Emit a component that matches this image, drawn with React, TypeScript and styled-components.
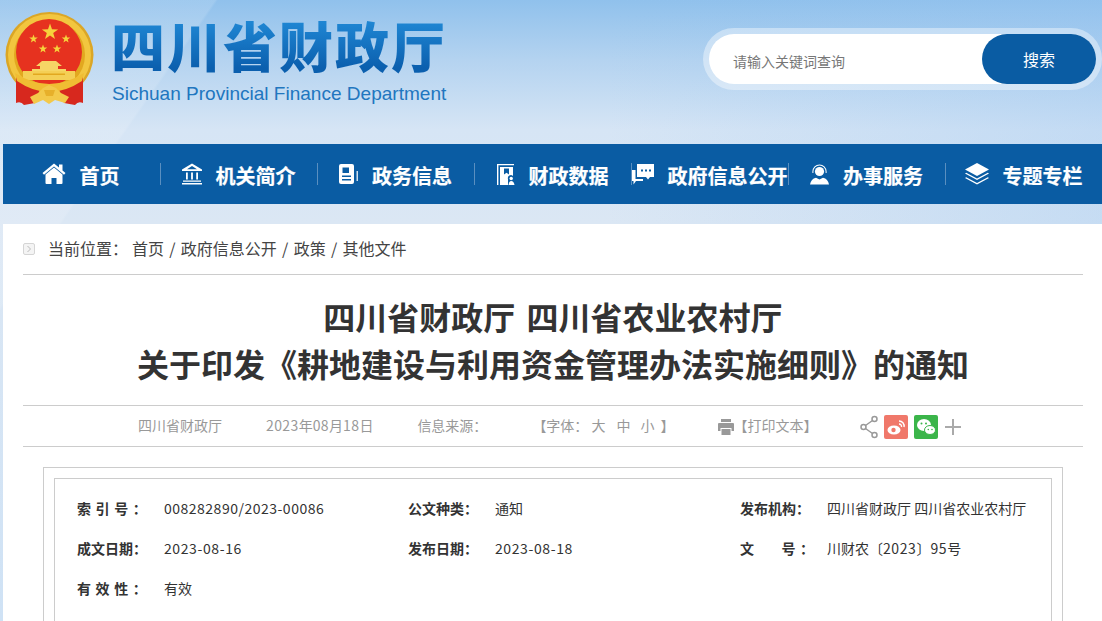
import React from "react";
import styled, { createGlobalStyle } from "styled-components";

const GlobalStyle = createGlobalStyle`
  html, body {
    margin: 0;
    padding: 0;
    height: 621px;
    overflow: hidden;
  }
  body {
    font-family: "Noto Sans CJK SC", "Noto Sans", sans-serif;
    color: #333;
    background:
      linear-gradient(125deg, rgba(255,255,255,0.14) 0 14%, rgba(255,255,255,0) 14.2%),
      linear-gradient(90deg, rgba(150,195,240,0) 55%, rgba(150,195,240,0.3) 100%),
      linear-gradient(180deg, #90c1ec 0, #b4d3f0 60px, #d6e5f5 130px, #dbe7f4 224px, #cfe2f5 621px);
  }
`;

const Page = styled.div`
  width: 1102px;
  height: 621px;
  overflow: hidden;
`;

const Header = styled.header`
  height: 144px;
  display: flex;
  justify-content: space-between;
  padding: 11px 0 0 5px;
  box-sizing: border-box;
`;

const Brand = styled.div`
  display: flex;
  align-items: flex-start;
  gap: 17px;
`;

const BrandText = styled.div`
  display: flex;
  flex-direction: column;
  padding-top: 1px;
`;

const BrandTitle = styled.div`
  font-size: 54px;
  line-height: 66px;
  font-weight: 900;
  letter-spacing: 2px;
  margin-left: -1px;
  white-space: nowrap;
  background: linear-gradient(180deg, #1f86d3 15%, #0b5fae 85%);
  -webkit-background-clip: text;
  background-clip: text;
  color: transparent;
`;

const BrandSub = styled.div`
  font-family: "Liberation Sans", Arial, sans-serif;
  font-size: 19.05px;
  line-height: 22px;
  color: #2176bf;
  margin-top: 5px;
  white-space: nowrap;
`;

const SearchRing = styled.div`
  width: 399px;
  height: 62px;
  margin-top: 17px;
  padding: 6px;
  box-sizing: border-box;
  border-radius: 31px;
  background: rgba(255, 255, 255, 0.4);
`;

const SearchBox = styled.div`
  height: 50px;
  display: flex;
  align-items: center;
  justify-content: space-between;
  border-radius: 25px;
  background: #fff;
`;

const SearchHint = styled.span`
  font-size: 14px;
  color: #777;
  margin-left: 24px;
  margin-top: 3px;
`;

const SearchButton = styled.button`
  width: 114px;
  height: 50px;
  border: 0;
  border-radius: 25px;
  background: #0a5ca3;
  color: #fff;
  font-family: inherit;
  font-size: 16px;
`;

const Nav = styled.nav`
  margin-left: 3px;
  height: 60px;
  display: grid;
  grid-template-columns: repeat(7, 157px);
  align-items: center;
  background: #0a5ca3;
`;

const NavItem = styled.div<{ $first?: boolean }>`
  height: 22px;
  display: flex;
  align-items: center;
  justify-content: center;
  gap: 14px;
  padding-right: ${(p) => (p.$first ? "2px" : "1px")};
  color: #fff;
  font-size: 20px;
  font-weight: 700;
  -webkit-text-stroke: 0.2px #fff;
  white-space: nowrap;
  box-sizing: border-box;
  border-left: ${(p) => (p.$first ? "0" : "1px solid #5a8fc0")};
  span {
    margin-top: 2px;
  }
  svg {
    flex: none;
    fill: #fff;
  }
`;

const Main = styled.main`
  margin: 20px 0 0 3px;
  height: 397px;
  padding: 0 19px 0 20px;
  background: #fff;
  overflow: hidden;
`;

const Crumbs = styled.div`
  height: 50px;
  display: flex;
  align-items: center;
  font-size: 16px;
  border-bottom: 1px solid #ccc;
  color: #444;
`;

const CrumbIcon = styled.svg`
  flex: none;
  margin-right: 13px;
`;

const CrumbLabel = styled.span`
  width: 84px;
  white-space: nowrap;
  margin-bottom: 3px;
`;

const CrumbPath = styled.span`
  margin-bottom: 3px;
  word-spacing: 1.7px;
`;

const Title = styled.h1`
  margin: 0;
  height: 130px;
  padding-top: 18px;
  box-sizing: border-box;
  font-size: 32px;
  line-height: 47px;
  font-weight: 700;
  text-align: center;
  word-spacing: 4px;
`;

const Meta = styled.div`
  height: 40px;
  display: flex;
  align-items: center;
  padding-left: 115px;
  font-size: 14px;
  color: #999;
  white-space: pre;
  border-top: 1px solid #ccc;
  border-bottom: 1px solid #ccc;
`;

const MetaText = styled.span<{ $gap?: number }>`
  margin-left: ${(p) => p.$gap ?? 0}px;
  margin-bottom: 2px;
`;

const SizeOption = styled.span<{ $gap: number }>`
  margin-left: ${(p) => p.$gap}px;
  margin-bottom: 2px;
`;

const MetaIcon = styled.svg<{ $gap: number }>`
  flex: none;
  margin-left: ${(p) => p.$gap}px;
  margin-top: 2px;
`;

const Digits = styled.span<{ $track: number }>`
  letter-spacing: ${(p) => p.$track}px;
`;

const InfoOuter = styled.div`
  margin: 20px 20px 0;
  padding: 10px;
  border: 1px solid #ccc;
`;

const InfoInner = styled.div`
  height: 160px;
  padding: 9px 0 0 22px;
  box-sizing: border-box;
  border: 1px solid #ccc;
  display: grid;
  grid-template-columns: 331px 332px 1fr;
  grid-auto-rows: 40px;
  align-items: center;
`;

const InfoCell = styled.div`
  display: flex;
  font-size: 14px;
  white-space: nowrap;
`;

const InfoLabel = styled.span`
  width: 87px;
  flex: none;
  font-weight: 700;
  font-size: 14px;
  word-spacing: 1.4px;
  white-space: pre;
`;

function Emblem() {
  const star = (cx: number, cy: number, r: number) => {
    const pts: string[] = [];
    for (let i = 0; i < 10; i++) {
      const a = -Math.PI / 2 + (i * Math.PI) / 5;
      const d = i % 2 ? r * 0.4 : r;
      pts.push(`${(cx + d * Math.cos(a)).toFixed(1)},${(cy + d * Math.sin(a)).toFixed(1)}`);
    }
    return <polygon key={`${cx}-${cy}`} points={pts.join(" ")} fill="#f6d23c" />;
  };
  return (
    <svg width="90" height="96" viewBox="0 0 90 96">
      <ellipse cx="44.5" cy="44" rx="44" ry="43" fill="#dba626" />
      <ellipse cx="44.5" cy="44" rx="41.5" ry="41" fill="#f2c63f" />
      <ellipse cx="44.5" cy="44" rx="35.5" ry="35" fill="#e2a81f" />
      <circle cx="44" cy="41" r="33" fill="#e6321f" />
      {star(45, 21, 8.5)}
      {star(28.5, 28, 4.5)}
      {star(61, 28, 4.5)}
      {star(38, 38, 4.5)}
      {star(52, 38, 4.5)}
      <path d="M37 50 h14 l6 5 h-4 v3 h8 v2 h-34 v-2 h8 v-3 h-4 Z" fill="#f6d665" />
      <path d="M18 60 h52 v9 H18 Z" fill="#f4cf55" />
      <path d="M28 62.5 h32 v1.5 H28 Z" fill="#e2a81f" />
      <path d="M11 66 L11 92 Q16 90 19 94 L30 92 L36 76 Z" fill="#d7281e" />
      <path d="M78 66 L78 92 Q73 90 70 94 L59 92 L53 76 Z" fill="#d7281e" />
      <path d="M10 62 Q44 84 79 62 L77 70 Q44 92 12 70 Z" fill="#f0bd33" />
      <path d="M25 86 L33 82 L38 77 L44 74 L51 77 L56 82 L64 86 L60 92 L50 89 L44 93 L38 89 L29 93 Z" fill="#f3c94a" />
      <path d="M39 79 h11 l-2 6 h-7 Z" fill="#e7b02a" />
    </svg>
  );
}

const HomeIcon = () => (
  <svg width="24" height="22" viewBox="0 0 24 22">
    <path d="M12 4.5 L3.5 11.5 V20 a1 1 0 0 0 1 1 h5 v-6 h5 v6 h5 a1 1 0 0 0 1-1 V11.5 Z" />
    <path d="M12 0.5 L0.5 10 L2 11.8 L12 3.6 L22 11.8 L23.5 10 L20.5 7.5 V1.5 H17 V4.6 Z" />
  </svg>
);

const BankIcon = () => (
  <svg width="20" height="22" viewBox="0 0 20 22">
    <path fillRule="evenodd" d="M10 0.5 L20 6.5 V8 H0 V6.5 Z M10 3 L5 6.3 H15 Z" />
    <path d="M4 9.5h1.8v7H4zM9.1 9.5h1.8v7H9.1zM14.2 9.5h1.8v7h-1.8zM1 17.5h18v1.2H1zM0 20h20v1.6H0z" />
  </svg>
);

const DocIcon = () => (
  <svg width="19" height="20" viewBox="0 0 19 20">
    <path fillRule="evenodd" d="M2 0 H13 a2 2 0 0 1 2 2 V18 a2 2 0 0 1-2 2 H2 a2 2 0 0 1-2-2 V2 a2 2 0 0 1 2-2 Z M3.5 3.5 V9 H10 V3.5 Z M3 11.5 V13 H12 V11.5 Z M3 15 V16.5 H12 V15 Z" />
    <rect x="17.6" y="7" width="1.2" height="10" />
  </svg>
);

const DataIcon = () => (
  <svg width="18" height="21" viewBox="0 0 18 21">
    <path d="M0 0 H17 V1.2 H1.4 V21 H0 Z" />
    <path fillRule="evenodd" d="M3 3 H16 V12 A3 3 0 0 0 11 15 V21 H3 Z M7 4.5 V10.5 L9.5 8.7 L12 10.5 V4.5 Z" />
    <circle cx="14.2" cy="14.5" r="1.7" />
    <path d="M11.5 21 Q12 17 14.2 17 Q16.8 17 17.5 21 Z" />
  </svg>
);

const ChatIcon = () => (
  <svg width="22" height="21" viewBox="0 0 22 21">
    <path fillRule="evenodd" d="M5 0 H22 V13 H18 L16 15.4 L14 13 H5 Z M9 5.5 h2 v2 h-2 Z M13 5.5 h2 v2 h-2 Z M17 5.5 h2 v2 h-2 Z" />
    <path d="M0 6 H3.5 V15 H11 V17 H4 L1.5 20.5 V17 H0 Z" />
  </svg>
);

const ServiceIcon = () => (
  <svg width="19" height="21" viewBox="0 0 19 21">
    <circle cx="9.5" cy="7.5" r="4.6" />
    <path d="M2.4 9 V7.5 a7.1 7.1 0 0 1 14.2 0 V9 h-1 V7.5 a6.1 6.1 0 0 0-12.2 0 V9 Z" />
    <path d="M0 20.5 Q1 15 6 13.8 L9.5 15.6 L13 13.8 Q18 15 19 20.5 Z" />
  </svg>
);

const LayersIcon = () => (
  <svg width="24" height="22" viewBox="0 0 24 22">
    <path d="M12 0 L24 6.5 L12 13 L0 6.5 Z" />
    <path d="M0 10.5 L1.2 9.8 L12 15.6 L22.8 9.8 L24 10.5 L12 17 Z" />
    <path d="M0 15 L1.2 14.3 L12 20.1 L22.8 14.3 L24 15 L12 21.5 Z" />
  </svg>
);

const navItems = [
  { label: "首页", icon: <HomeIcon /> },
  { label: "机关简介", icon: <BankIcon /> },
  { label: "政务信息", icon: <DocIcon /> },
  { label: "财政数据", icon: <DataIcon /> },
  { label: "政府信息公开", icon: <ChatIcon /> },
  { label: "办事服务", icon: <ServiceIcon /> },
  { label: "专题专栏", icon: <LayersIcon /> },
];

const infoRows: [string, React.ReactNode][] = [
  ["索 引 号 ：", <Digits $track={0.5}>008282890/2023-00086</Digits>],
  ["公文种类：", "通知"],
  ["发布机构：", "四川省财政厅 四川省农业农村厅"],
  ["成文日期：", <Digits $track={0.6}>2023-08-16</Digits>],
  ["发布日期：", <Digits $track={0.6}>2023-08-18</Digits>],
  ["文      号 ：", <>川财农〔<Digits $track={0.6}>2023</Digits>〕<Digits $track={0.6}>95</Digits>号</>],
  ["有 效 性 ：", "有效"],
];

export default function App() {
  return (
    <Page>
      <GlobalStyle />
      <Header>
        <Brand>
          <Emblem />
          <BrandText>
            <BrandTitle>四川省财政厅</BrandTitle>
            <BrandSub>Sichuan Provincial Finance Department</BrandSub>
          </BrandText>
        </Brand>
        <SearchRing>
          <SearchBox>
            <SearchHint>请输入关键词查询</SearchHint>
            <SearchButton>搜索</SearchButton>
          </SearchBox>
        </SearchRing>
      </Header>
      <Nav>
        {navItems.map((item, i) => (
          <NavItem key={item.label} $first={i === 0}>
            {item.icon}
            <span>{item.label}</span>
          </NavItem>
        ))}
      </Nav>
      <Main>
        <Crumbs>
          <CrumbIcon width="12" height="12" viewBox="0 0 12 12">
            <rect x="0.5" y="0.5" width="11" height="11" rx="1.5" fill="#f4f4f4" stroke="#d5d5d5" />
            <path d="M4.5 3 L7.5 6 L4.5 9" fill="none" stroke="#bbb" />
          </CrumbIcon>
          <CrumbLabel>当前位置：</CrumbLabel>
          <CrumbPath>首页 / 政府信息公开 / 政策 / 其他文件</CrumbPath>
        </Crumbs>
        <Title>
          四川省财政厅 四川省农业农村厅
          <br />
          关于印发《耕地建设与利用资金管理办法实施细则》的通知
        </Title>
        <Meta>
          <MetaText>四川省财政厅</MetaText>
          <MetaText $gap={44}>
            <Digits $track={0.4}>2023</Digits>年<Digits $track={0.4}>08</Digits>月<Digits $track={0.4}>18</Digits>日
          </MetaText>
          <MetaText $gap={44}>信息来源：</MetaText>
          <MetaText $gap={45}>【字体：</MetaText>
          <SizeOption $gap={3}>大</SizeOption>
          <SizeOption $gap={11}>中</SizeOption>
          <SizeOption $gap={10}>小</SizeOption>
          <MetaText $gap={3}> 】</MetaText>
          <MetaIcon $gap={43} width="16" height="16" viewBox="0 0 16 16" fill="#999">
            <path d="M3 0h10v3H3z" />
            <path fillRule="evenodd" d="M1 4h14a1 1 0 0 1 1 1v7h-2.5V9h-11v3H0V5a1 1 0 0 1 1-1z" />
            <path d="M3.5 10h9v6h-9z" />
          </MetaIcon>
          <MetaText>【打印文本】</MetaText>
          <MetaIcon $gap={42} width="18" height="24" viewBox="0 0 18 24" fill="none" stroke="#999" strokeWidth="1.5">
            <circle cx="14.5" cy="4" r="2.5" />
            <circle cx="3.5" cy="12" r="2.5" />
            <circle cx="14.5" cy="20" r="2.5" />
            <path d="M12.5 5.5 L5.5 10.5 M5.5 13.5 L12.5 18.5" />
          </MetaIcon>
          <MetaIcon $gap={6} width="24" height="24" viewBox="0 0 24 24">
            <rect width="24" height="24" rx="2" fill="#f0786a" />
            <ellipse cx="10" cy="15" rx="6.5" ry="4.5" fill="#fff" />
            <circle cx="9.5" cy="15" r="2.2" fill="#f0786a" />
            <path d="M15 6 a5 5 0 0 1 5 6 M15 9 a2.5 2.5 0 0 1 2.5 3" fill="none" stroke="#fff" strokeWidth="1.4" />
          </MetaIcon>
          <MetaIcon $gap={6} width="24" height="24" viewBox="0 0 24 24">
            <rect width="24" height="24" rx="2" fill="#3bb54a" />
            <ellipse cx="10" cy="10" rx="7" ry="6" fill="#fff" />
            <ellipse cx="16" cy="15" rx="5.5" ry="4.5" fill="#fff" stroke="#3bb54a" />
            <circle cx="7.5" cy="8.5" r="1" fill="#3bb54a" />
            <circle cx="12" cy="8.5" r="1" fill="#3bb54a" />
            <circle cx="14.3" cy="14.5" r="0.8" fill="#3bb54a" />
            <circle cx="18" cy="14.5" r="0.8" fill="#3bb54a" />
          </MetaIcon>
          <MetaIcon $gap={6} width="18" height="18" viewBox="0 0 18 18" fill="#aaa">
            <path d="M8 1h2v7h7v2h-7v7H8v-7H1V8h7z" />
          </MetaIcon>
        </Meta>
        <InfoOuter>
          <InfoInner>
            {infoRows.map(([label, value]) => (
              <InfoCell key={label}>
                <InfoLabel>{label}</InfoLabel>
                <span>{value}</span>
              </InfoCell>
            ))}
          </InfoInner>
        </InfoOuter>
      </Main>
    </Page>
  );
}
